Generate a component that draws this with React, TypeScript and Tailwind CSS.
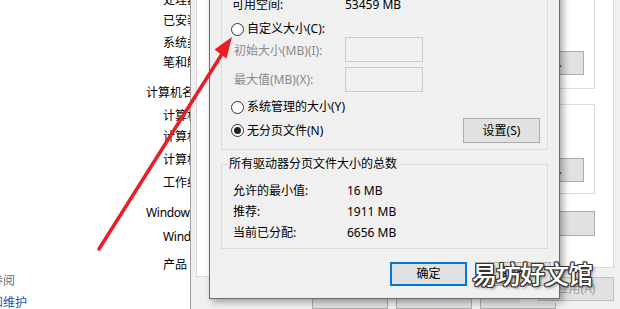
import React from "react"

function Radio({ checked, label }: { checked?: boolean; label: string }) {
  return (
    <div className="flex h-[16px] items-center gap-[3px] pl-[9px]">
      <span className="flex size-[13px] items-center justify-center rounded-full border border-[#333333] bg-white">
        {checked && <span className="size-[7px] rounded-full bg-[#222222]" />}
      </span>
      <span>{label}</span>
    </div>
  )
}

function Btn({ className, children }: { className: string; children?: React.ReactNode }) {
  return <div className={`flex items-center justify-center bg-[#e1e1e1] ${className}`}>{children}</div>
}

const leftRows = [
  { text: "处理器:", cls: "pl-[17px]" },
  { text: "已安装的内存(RAM):", cls: "mt-[1px] pl-[17px]" },
  { text: "系统类型:", cls: "mt-[2px] pl-[17px]" },
  { text: "笔和触控:", cls: "pl-[17px]" },
  { text: "计算机名、域和工作组设置", cls: "mt-[10px]" },
  { text: "计算机名:", cls: "mt-[3px] pl-[17px]" },
  { text: "计算机全名:", cls: "mt-[1px] pl-[17px]" },
  { text: "计算机描述:", cls: "mt-[3px] pl-[17px]" },
  { text: "工作组:", cls: "mt-[3px] pl-[17px]" },
  { text: "Windows 激活", cls: "mt-[10px] tracking-[-0.3px]" },
  { text: "Windows 已激活", cls: "mt-[4px] pl-[17px] tracking-[-0.3px]" },
  { text: "产品 ID: 00000", cls: "mt-[8px] pl-[17px]" },
]

export default function App() {
  return (
    <div className="relative h-[309px] w-[620px] overflow-hidden bg-white font-['Noto_Sans','Noto_Sans_CJK_SC',sans-serif] text-[12px] text-black">
      {/* system page behind everything */}
      <div className="absolute left-0 top-0 flex h-full w-[190px] overflow-hidden">
        <div className="ml-[-33px] flex w-[179px] shrink-0 flex-col pt-[271px]">
          <div className="h-[20px] leading-[20px] text-[#6d6d6d]">另请参阅</div>
          <div className="mt-[2px] h-[20px] leading-[20px] text-[#1a56b8]">安全和维护</div>
        </div>
        <div className="mt-[-10px] flex shrink-0 flex-col whitespace-nowrap">
          {leftRows.map((r) => (
            <div key={r.text} className={`h-[20px] leading-[20px] ${r.cls}`}>
              {r.text}
            </div>
          ))}
        </div>
      </div>

      {/* system properties */}
      <div className="absolute left-[190px] top-0 flex h-full w-[430px] flex-col border-l border-[#a0a0a0] bg-[#f0f0f0]">
        <div className="ml-[5px] mt-[-10px] h-[305px] w-[400px] border border-[#d9d9d9] bg-white" />
        <div className="ml-[121px] mt-[9px] flex gap-[8px]">
          <Btn className="h-[23px] w-[76px] border border-[#adadad]" />
          <Btn className="h-[23px] w-[76px] border border-[#adadad]" />
          <Btn className="h-[23px] w-[76px] border border-[#adadad]" />
        </div>
      </div>

      {/* performance options */}
      <div className="absolute left-[520px] right-0 top-0 flex h-[303px] flex-col bg-[#f0f0f0]">
        <div className="mx-[6px] mt-[-10px] flex h-[278px] flex-col border border-[#d9d9d9] bg-white">
          <div className="ml-[8px] mr-[18px] flex h-[98px] flex-col items-end border border-[#dcdcdc] pr-[10px]">
            <Btn className="mt-[59px] h-[24px] w-[76px] border border-[#adadad] pr-[16px]">设置(S)...</Btn>
          </div>
          <div className="ml-[8px] mr-[18px] mt-[15px] flex h-[90px] flex-col items-end border border-[#dcdcdc] pr-[10px]">
            <Btn className="mt-[53px] h-[24px] w-[76px] border border-[#adadad] pr-[16px]">设置(E)...</Btn>
          </div>
          <Btn className="mr-[18px] mt-[17px] h-[25px] w-[76px] self-end border border-[#adadad]" />
        </div>
        <Btn className="mr-[6px] mt-[9px] h-[24px] w-[76px] self-end border border-[#bfbfbf] text-[#a0a0a0]">应用(A)</Btn>
      </div>

      {/* virtual memory dialog */}
      <div className="absolute left-[209px] top-[-10px] flex w-[351px] flex-col border border-[#6b6b6b] bg-[#f0f0f0] shadow-[3px_3px_7px_rgba(0,0,0,0.35)]">
        <div className="mx-[11px] flex flex-col border border-[#dcdcdc] pb-[6px]">
          <div className="mt-[3px] flex h-[20px] items-center pl-[10px]">
            <span className="w-[113px]">可用空间:</span>
            <span>53459 MB</span>
          </div>
          <div className="mt-[6px]">
            <Radio label="自定义大小(C):" />
          </div>
          <div className="flex h-[25px] items-center pl-[12px] text-[#8a8a8a]">
            <span className="mt-[2px] w-[111px]">初始大小(MB)(I):</span>
            <span className="h-[25px] w-[78px] border border-[#cccccc] bg-[#f0f0f0]" />
          </div>
          <div className="mt-[5px] flex h-[25px] items-center pl-[12px] text-[#8a8a8a]">
            <span className="w-[111px]">最大值(MB)(X):</span>
            <span className="h-[25px] w-[78px] border border-[#cccccc] bg-[#f0f0f0]" />
          </div>
          <div className="mt-[7px]">
            <Radio label="系统管理的大小(Y)" />
          </div>
          <div className="mt-[3px] flex h-[25px] items-center justify-between pr-[7px]">
            <Radio checked label="无分页文件(N)" />
            <Btn className="h-[25px] w-[77px] border border-[#adadad]">设置(S)</Btn>
          </div>
        </div>

        <fieldset className="mx-[11px] mt-[6px] border border-[#dcdcdc] pb-[5px]">
          <legend className="ml-[6px] px-[1px] leading-[16px]">所有驱动器分页文件大小的总数</legend>
          <div className="flex flex-col pl-[11px] pt-[8px]">
            <div className="flex h-[21px] items-center">
              <span className="w-[114px]">允许的最小值:</span>
              <span>16 MB</span>
            </div>
            <div className="flex h-[21px] items-center">
              <span className="w-[114px]">推荐:</span>
              <span>1911 MB</span>
            </div>
            <div className="flex h-[21px] items-center">
              <span className="w-[114px]">当前已分配:</span>
              <span>6656 MB</span>
            </div>
          </div>
        </fieldset>

        <div className="mt-[13px] flex justify-end gap-[8px] pb-[12px] pr-[8px]">
          <Btn className="h-[24px] w-[77px] border-2 border-[#0078d7]">确定</Btn>
          <Btn className="h-[24px] w-[76px] border border-[#adadad]">取消</Btn>
        </div>
      </div>

      {/* watermark */}
      <div className="absolute left-[472px] top-[262px] text-[25px] font-medium leading-none tracking-[-1px] text-white [text-shadow:1px_1px_0_#333,-1px_-1px_0_#333,1px_-1px_0_#333,-1px_1px_0_#333,0_1px_0_#333,1px_0_0_#333,0_-1px_0_#333,-1px_0_0_#333,2px_2px_3px_rgba(0,0,0,0.45)]">
        易坊好文馆
      </div>

      {/* red arrow */}
      <svg className="pointer-events-none absolute left-0 top-0" width="620" height="309" viewBox="0 0 620 309">
        <line x1="99" y1="249" x2="222" y2="54" stroke="#ec1c24" strokeWidth="3.5" strokeLinecap="round" />
        <polygon points="232,37 214.5,49.5 226.5,58.5" fill="#ec1c24" />
      </svg>
    </div>
  )
}
